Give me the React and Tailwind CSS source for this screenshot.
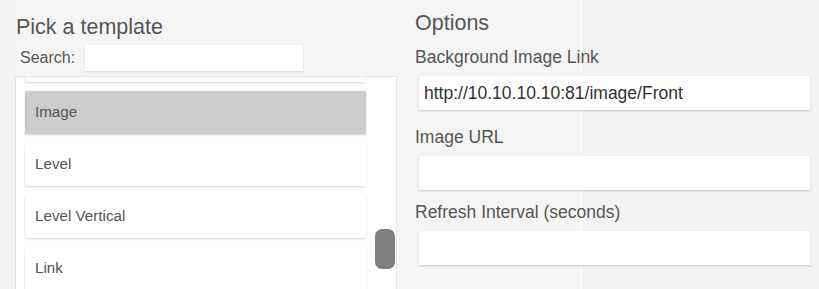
import React from "react";

const items = ["", "Image", "Level", "Level Vertical", "Link"];

function Field({ label, value, mt }) {
  return (
    <div className={mt}>
      <div className="h-[20px] leading-[20px] text-[17.5px] text-[#555]">{label}</div>
      <div className="mt-[9px] ml-[4px] w-[391px] h-[34px] bg-white shadow-[0_1px_2px_rgba(0,0,0,0.18)] flex items-center pl-[5px] text-[17.5px] text-[#333]">
        {value}
      </div>
    </div>
  );
}

export default function App() {
  return (
    <div
      className="w-[819px] h-[289px] overflow-hidden flex bg-[linear-gradient(to_right,#f3f3f3_15px,#f5f5f5_15px,#f5f5f5_581px,#fbfbfb_581px,#fbfbfb_582px,#f3f3f3_582px)]"
      style={{ fontFamily: '"Liberation Sans", Arial, sans-serif' }}
    >
      <div className="w-[405px] shrink-0 pt-[14px]">
        <div className="pl-[16px] h-[26px] leading-[26px] text-[21.5px] text-[#555]">Pick a template</div>
        <div className="mt-[5px] pl-[20px] flex items-center h-[26px]">
          <span className="text-[16px] text-[#555] leading-[26px]">Search:</span>
          <div className="ml-[10px] w-[218px] h-[26px] bg-white shadow-[0_1px_2px_rgba(0,0,0,0.12)]" />
        </div>
        <div className="mt-[5px] ml-[15px] w-[382px] h-[240px] border border-[#dfe6ef] bg-white overflow-hidden flex">
          <div className="ml-[9px] w-[341px] mt-[-38px] flex flex-col gap-[9px]">
            {items.map((it, i) => (
              <div
                key={i}
                className={
                  "h-[43px] shrink-0 flex items-center pl-[10px] text-[15.2px] text-[#555] shadow-[0_1px_2px_rgba(0,0,0,0.16)] " +
                  (it === "Image" ? "bg-[#cccccc]" : "bg-white")
                }
              >
                {it}
              </div>
            ))}
          </div>
          <div className="ml-[9px] w-[20px]">
            <div className="mt-[152px] w-[20px] h-[40px] rounded-[7px] bg-[#808080]" />
          </div>
        </div>
      </div>
      <div className="flex-1 pl-[10px] pt-[10px]">
        <div className="h-[26px] leading-[26px] text-[21.5px] text-[#555]">Options</div>
        <Field label="Background Image Link" value="http://10.10.10.10:81/image/Front" mt="mt-[11px]" />
        <Field label="Image URL" value="" mt="mt-[17px]" />
        <Field label="Refresh Interval (seconds)" value="" mt="mt-[12px]" />
      </div>
    </div>
  );
}
